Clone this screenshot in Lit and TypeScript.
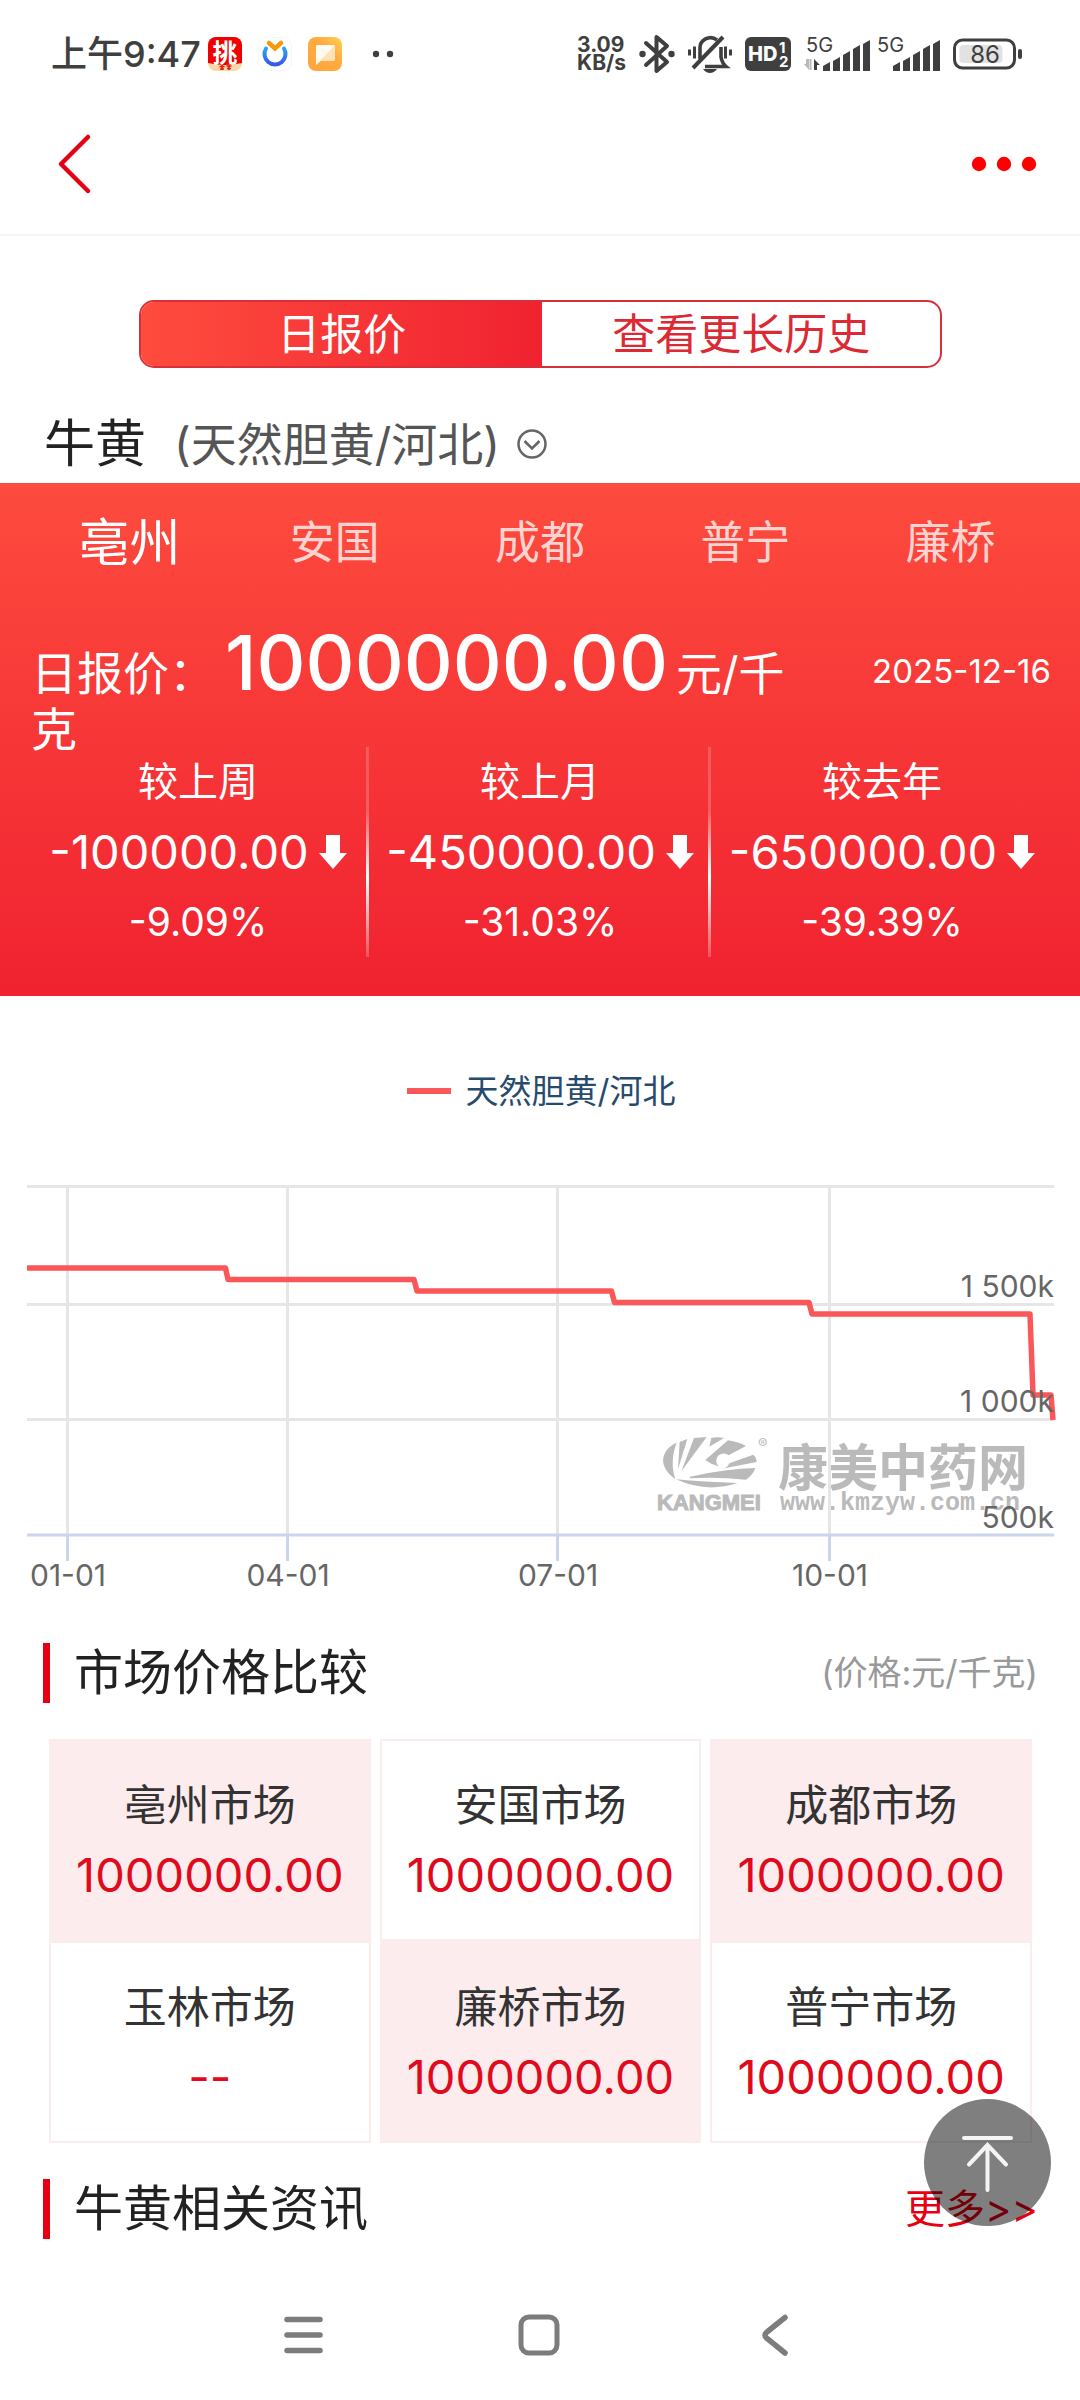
import { LitElement, html, svg, css } from "lit";
import { customElement, property, state } from "lit/decorators.js";
import { classMap } from "lit/directives/class-map.js";

const FONT = css`Inter, "Noto Sans CJK SC", sans-serif`;

/* ---------- status bar ---------- */

@customElement("status-bar")
class StatusBar extends LitElement {
  static styles = css`
    :host {
      display: flex;
      justify-content: space-between;
      align-items: center;
      height: 80px;
      padding: 14px 58px 0 51px;
      color: #3f3f3f;
      font-family: ${FONT};
    }
    .group {
      display: flex;
      align-items: center;
      gap: 13px;
    }
    .apps {
      display: flex;
      align-items: center;
      gap: 16px;
    }
    .left {
      gap: 7px;
    }
    .time {
      font-size: 36px;
      font-weight: 500;
      line-height: 40px;
    }
    .speed {
      font-size: 21px;
      font-weight: 700;
      line-height: 18px;
    }
    .signals {
      display: flex;
      gap: 7px;
    }
    svg {
      display: block;
      flex: none;
    }
    text {
      font-family: ${FONT};
    }
  `;

  private bars(x: number) {
    const tops = [26, 21, 15, 9, 4];
    return tops.map(
      (t, i) => svg`<path d="M${x + i * 10} 34v-${31 - t}l7 -4v${35 - t}z" fill="#3f3f3f" />`
    );
  }

  render() {
    return html`
      <div class="group left">
        <span class="time">上午9:47</span>
        <div class="apps">
          <svg width="34" height="34" viewBox="0 0 34 34" aria-hidden="true">
            <rect width="34" height="34" rx="8" fill="#f7d7a8" />
            <path d="M8 0h18a8 8 0 0 1 8 8v18q-17 4 -34 0V8a8 8 0 0 1 8 -8z" fill="#f00000" />
            <text x="17" y="25" text-anchor="middle" font-size="25" font-weight="700" fill="#fff">挑</text>
            <path d="M11.500 29.500h5M12 32h4M14 28v5M18.500 29h5M19 31.500h4M21 28v5" stroke="#e0200c" stroke-width="1.600" />
          </svg>
          <svg width="34" height="34" viewBox="0 0 34 34" aria-hidden="true">
            <defs>
              <linearGradient id="ring" x1="0" y1="0" x2="0" y2="1">
                <stop offset="0" stop-color="#2ea2f0" />
                <stop offset="1" stop-color="#3b57ea" />
              </linearGradient>
            </defs>
            <rect x=".5" y=".5" width="33" height="33" rx="8" fill="#fff" stroke="#f6f6f6" />
            <path d="M8 11.500a10.500 10.500 0 1 0 18 0" fill="none" stroke="url(#ring)" stroke-width="4" stroke-linecap="round" />
            <path d="M11 6l6 5.500l6 -5.500" fill="none" stroke="#f59a0c" stroke-width="4.500" stroke-linecap="round" />
          </svg>
          <svg width="34" height="34" viewBox="0 0 34 34" aria-hidden="true">
            <defs>
              <linearGradient id="amber" x1="0" y1="1" x2="1" y2="0">
                <stop offset="0" stop-color="#ffa53c" />
                <stop offset=".6" stop-color="#ffab40" />
                <stop offset="1" stop-color="#ffd050" />
              </linearGradient>
            </defs>
            <rect width="34" height="34" rx="8" fill="url(#amber)" />
            <path d="M10 8h15a2 2 0 0 1 2 2v12a2 2 0 0 1 -2 2H13l-5 4V10a2 2 0 0 1 2 -2z" fill="#ffe2b8" />
            <path d="M10 8h17L8 28V10a2 2 0 0 1 2 -2z" fill="#fffaf0" />
          </svg>
          <svg width="50" height="34" viewBox="0 0 50 34" aria-hidden="true">
            <circle cx="18" cy="17" r="3.200" fill="#3f3f3f" />
            <circle cx="32" cy="17" r="3.200" fill="#3f3f3f" />
          </svg>
        </div>
      </div>
      <div class="group">
        <div class="speed">3.09<br />KB/s</div>
        <svg width="36" height="40" viewBox="0 0 36 40" aria-hidden="true">
          <path d="M7 9L28 28L17.500 37V3L28 12L7 31" fill="none" stroke="#3f3f3f" stroke-width="4" stroke-linejoin="round" stroke-linecap="round" />
          <circle cx="3.500" cy="20" r="3.200" fill="#3f3f3f" />
          <circle cx="32.500" cy="20" r="3.200" fill="#3f3f3f" />
        </svg>
        <svg width="44" height="40" viewBox="0 0 44 40" aria-hidden="true">
          <g fill="none" stroke="#3f3f3f" stroke-width="3.600">
            <path d="M12 25V15a10.500 10.500 0 0 1 17 -9" />
            <path d="M33 13v10q1 6 5 9.500H17" />
            <path d="M35 3L5 34" stroke-width="4" />
          </g>
          <path d="M15 35h14q-3 4 -7 4t-7 -4z" fill="#3f3f3f" />
          <path d="M1.500 15.500v6M6.500 12.500v12M37.500 12.500v12M42.500 15.500v6" stroke="#3f3f3f" stroke-width="3" />
        </svg>
        <svg width="46" height="34" viewBox="0 0 46 34" aria-hidden="true">
          <rect width="46" height="34" rx="6" fill="#3f3f3f" />
          <text x="3" y="24" font-size="20" font-weight="800" fill="#fff">HD</text>
          <text x="34" y="16" font-size="15" font-weight="700" fill="#fff">1</text>
          <text x="34" y="30" font-size="15" font-weight="700" fill="#fff">2</text>
        </svg>
        <div class="signals">
          <svg width="66" height="50" viewBox="0 -8 66 50" aria-hidden="true">
            <text x="2" y="15" font-size="20" fill="#3f3f3f">5G</text>
            <path d="M5 22v11L0 27h2v-5z" fill="#b9b9b9" />
            <path d="M6.500 22v11" stroke="#b9b9b9" stroke-width="2" />
            <path d="M10 33V22l6 6h-3v5z" fill="#3f3f3f" />
            ${this.bars(19)}
          </svg>
          <svg width="63" height="50" viewBox="0 -8 63 50" aria-hidden="true">
            <text x="0" y="15" font-size="20" fill="#3f3f3f">5G</text>
            ${this.bars(16)}
          </svg>
        </div>
        <svg width="69" height="32" viewBox="0 0 69 32" aria-hidden="true">
          <rect x="1.500" y="2" width="60" height="28" rx="8" fill="none" stroke="#3f3f3f" stroke-width="3" />
          <rect x="6.500" y="7" width="43" height="18" rx="4" fill="#e2e2e2" />
          <rect x="65" y="11" width="4" height="10" rx="2" fill="#3f3f3f" />
          <text x="32" y="25" text-anchor="middle" font-size="24" fill="#3f3f3f">86</text>
        </svg>
      </div>
    `;
  }
}

/* ---------- price trend ---------- */

interface Tick {
  at: number;
  label: string;
}

@customElement("trend-chart")
class TrendChart extends LitElement {
  @property() series = "";

  static styles = css`
    :host {
      display: block;
      font-family: ${FONT};
    }
    .legend {
      display: flex;
      justify-content: center;
      align-items: center;
      gap: 15px;
      padding: 65px 0 0 2px;
      line-height: 60px;
      font-size: 33px;
      color: #274b6d;
    }
    .swatch {
      width: 44px;
      height: 6px;
      background: #fb5759;
    }
    .plot {
      display: block;
      width: 100%;
      height: auto;
    }
    .label {
      font-family: ${FONT};
      font-size: 30px;
      fill: #666;
    }
    .brand {
      font-family: ${FONT};
      font-size: 50px;
      font-weight: 700;
    }
    .latin {
      font-family: "Liberation Sans", sans-serif;
      font-size: 22px;
      font-weight: 700;
      stroke: #bababa;
      stroke-width: 1px;
    }
    .url {
      font-family: "Liberation Mono", monospace;
      font-size: 25px;
      font-weight: 700;
    }
    .reg {
      font-family: ${FONT};
      font-size: 14px;
    }
  `;

  private xTicks: Tick[] = [
    { at: 67, label: "01-01" },
    { at: 287, label: "04-01" },
    { at: 557, label: "07-01" },
    { at: 829, label: "10-01" },
  ];

  private yTicks: Tick[] = [
    { at: 183, label: "1 500k" },
    { at: 298, label: "1 000k" },
    { at: 414, label: "500k" },
  ];

  render() {
    return html`
      <div class="legend"><span class="swatch"></span>${this.series}</div>
      <svg class="plot" viewBox="0 0 1080 479" role="img" aria-label=${this.series}>
        <g fill="#bababa">
          <g transform="translate(640 289) scale(.3333)">
            <path d="M110 98C72 114 44 162 106 207C94 172 96 134 110 98z" />
            <path d="M119 96L142 87L114 178z" />
            <path d="M162 84L200 81L124 184z" />
            <path d="M214 84Q232 80 252 84L208 110z" />
            <path d="M196 150L264 91Q296 96 318 108L266 136A21 21 0 1 0 236 169Q214 164 196 150z" />
            <path d="M268 160L340 134Q350 142 350 156L238 178Q262 176 268 160z" />
            <path d="M150 200Q260 176 346 174Q340 194 318 209Q230 200 150 205z" />
            <path d="M108 208Q190 216 292 219Q200 250 108 208z" />
          </g>
          <text class="latin" x="657" y="389">KANGMEI</text>
          <text class="reg" x="758" y="328">®</text>
          <text class="brand" x="778" y="365">康美中药网</text>
          <text class="url" x="780" y="389">www.kmzyw.com.cn</text>
        </g>
        <g stroke="#e6e6e6" stroke-width="3">
          <path d="M27 65.500H1054M27 183.500H1054M27 298.500H1054" />
          ${this.xTicks.map((t) => svg`<path d="M${t.at + 0.5} 65V414" />`)}
        </g>
        <g stroke="#ccd6eb" stroke-width="3">
          <path d="M27 414H1054" />
          ${this.xTicks.map((t) => svg`<path d="M${t.at + 0.5} 414V440" />`)}
        </g>
        <path
          d="M27 147H225.500L228 158.500H414L417 170H611.500L614.500 181.500H809L812 193H1030L1033 274H1051L1053 299"
          fill="none" stroke="#fb5759" stroke-width="5.500" stroke-linejoin="round"
        />
        ${this.xTicks.map(
          (t) => svg`<text class="label" x=${t.at + 1} y="465" text-anchor="middle">${t.label}</text>`
        )}
        ${this.yTicks.map(
          (t) => svg`<text class="label" x="1054" y=${t.at - 7} text-anchor="end">${t.label}</text>`
        )}
      </svg>
    `;
  }
}

/* ---------- page ---------- */

@customElement("app-root")
class AppRoot extends LitElement {
  @state() private city = 0;

  private cities = ["亳州", "安国", "成都", "普宁", "廉桥"];

  private changes = [
    { name: "较上周", value: "-100000.00", rate: "-9.09%" },
    { name: "较上月", value: "-450000.00", rate: "-31.03%" },
    { name: "较去年", value: "-650000.00", rate: "-39.39%" },
  ];

  private markets = [
    { name: "亳州市场", price: "1000000.00" },
    { name: "安国市场", price: "1000000.00" },
    { name: "成都市场", price: "1000000.00" },
    { name: "玉林市场", price: "--" },
    { name: "廉桥市场", price: "1000000.00" },
    { name: "普宁市场", price: "1000000.00" },
  ];

  static styles = css`
    :host {
      display: flex;
      flex-direction: column;
      position: relative;
      min-height: 100vh;
      background: #fff;
      color: #222;
      font-family: ${FONT};
    }
    button,
    select {
      margin: 0;
      padding: 0;
      border: 0;
      background: none;
      color: inherit;
      font: inherit;
      cursor: pointer;
    }
    svg {
      display: block;
      flex: none;
    }
    h1,
    h2,
    p,
    ul {
      margin: 0;
      padding: 0;
      font-weight: 400;
    }
    .header {
      display: flex;
      justify-content: space-between;
      align-items: center;
      height: 140px;
      padding: 0 43px 0 57px;
      border-bottom: 2px solid #f4f4f4;
    }
    .segments {
      display: grid;
      grid-template-columns: 101fr 100fr;
      margin: 64px 138px 0 139px;
      border: 2px solid #d8303a;
      border-radius: 15px;
      overflow: hidden;
      font-size: 43px;
      line-height: 64px;
    }
    .segment {
      color: #dc2a35;
    }
    .segment.on {
      color: #fff;
      background: linear-gradient(90deg, #fe4c3e, #f02230);
    }
    .title {
      display: flex;
      align-items: center;
      gap: 28px;
      height: 78px;
      padding: 37px 44px 0;
    }
    .name {
      font-size: 51px;
      line-height: 80px;
    }
    .variety {
      display: flex;
      align-items: center;
      gap: 16px;
    }
    .pick {
      appearance: none;
      font-size: 46px;
      line-height: 80px;
      color: #555;
    }
    .quote {
      padding: 0 27px 39px;
      color: #fff;
      background: linear-gradient(180deg, #fd4b3e, #f02230);
    }
    .cities {
      display: grid;
      grid-template-columns: repeat(5, 1fr);
      height: 112px;
    }
    .city {
      font-size: 45px;
      color: #ffd3cf;
    }
    .city.on {
      font-size: 51px;
      color: #fff;
    }
    .today {
      display: flex;
      justify-content: space-between;
      align-items: flex-start;
      gap: 44px;
      padding: 39px 2px 0 4px;
    }
    .price {
      flex: 1;
      font-size: 46px;
      line-height: 56px;
    }
    .amount {
      margin: 0 8px 0 10px;
      font-size: 76px;
      font-weight: 500;
    }
    .date {
      font-size: 33px;
      line-height: 74px;
    }
    .changes {
      display: grid;
      grid-template-columns: repeat(3, 1fr);
      margin-top: -10px;
    }
    .change {
      display: flex;
      flex-direction: column;
      align-items: center;
      line-height: 70px;
      background: linear-gradient(180deg, #ffffff2e, #ffffff33 30%, #fff 62%, #ffffff33) right / 3px 100% no-repeat;
    }
    .change:last-child {
      background: none;
    }
    .term {
      font-size: 40px;
    }
    .delta {
      display: flex;
      align-items: center;
      gap: 10px;
      font-size: 47px;
    }
    .rate {
      font-size: 39px;
    }
    .section {
      display: flex;
      align-items: center;
      justify-content: space-between;
      margin-top: 36px;
      padding: 0 42px 0 43px;
      line-height: 60px;
    }
    .section.first {
      margin-top: 43px;
    }
    .heading {
      padding-left: 24px;
      border-left: 7px solid #e60012;
      font-size: 49px;
    }
    .unit {
      font-size: 34px;
      color: #999;
    }
    .more {
      font-size: 40px;
      color: #e60012;
      text-decoration: none;
    }
    .markets {
      display: grid;
      grid-template-columns: repeat(3, 1fr);
      column-gap: 9px;
      margin: 36px 48px 0 49px;
      list-style: none;
    }
    .market {
      display: flex;
      flex-direction: column;
      align-items: center;
      padding: 30px 0;
      border: 2px solid #fbecee;
      line-height: 69px;
    }
    .market:nth-child(odd) {
      background: #fdecee;
    }
    .place {
      font-size: 43px;
      color: #333;
    }
    .cost {
      font-size: 47px;
      color: #e00a1c;
    }
    .top {
      position: absolute;
      right: 29px;
      bottom: 174px;
      width: 127px;
      height: 127px;
      border-radius: 50%;
      background: #00000080;
    }
    .nav {
      display: flex;
      justify-content: space-between;
      align-items: center;
      height: 130px;
      margin-top: auto;
      padding: 0 282px 0 280px;
    }
  `;

  render() {
    return html`
      <status-bar></status-bar>
      <header class="header">
        <button aria-label="返回">
          <svg width="36" height="62" viewBox="0 0 36 62">
            <path d="M31 4L4 31L31 58" fill="none" stroke="#e60012" stroke-width="4.500" stroke-linecap="round" stroke-linejoin="round" />
          </svg>
        </button>
        <button aria-label="菜单">
          <svg width="66" height="16" viewBox="0 0 66 16" fill="#f00">
            <circle cx="8" cy="8" r="7.200" />
            <circle cx="33" cy="8" r="7.200" />
            <circle cx="58" cy="8" r="7.200" />
          </svg>
        </button>
      </header>

      <div class="segments">
        <button class="segment on">日报价</button>
        <button class="segment">查看更长历史</button>
      </div>

      <div class="title">
        <h1 class="name">牛黄</h1>
        <label class="variety">
          <select class="pick" aria-label="规格">
            <option>(天然胆黄/河北)</option>
          </select>
          <svg width="30" height="30" viewBox="0 0 30 30" fill="none" stroke="#666" stroke-width="2.500">
            <circle cx="15" cy="15" r="13.500" />
            <path d="M7.500 12L15 19.500L22.500 12" />
          </svg>
        </label>
      </div>

      <section class="quote">
        <div class="cities">
          ${this.cities.map(
            (c, i) => html`<button
              class=${classMap({ city: true, on: i === this.city })}
              @click=${() => (this.city = i)}
            >${c}</button>`
          )}
        </div>
        <div class="today">
          <p class="price">日报价：<span class="amount">1000000.00</span>元/千克</p>
          <time class="date">2025-12-16</time>
        </div>
        <div class="changes">
          ${this.changes.map(
            (c) => html`<div class="change">
              <span class="term">${c.name}</span>
              <span class="delta">${c.value}
                <svg width="28" height="34" viewBox="0 0 28 34" aria-hidden="true">
                  <path d="M7 0H21V18H28L14 34L0 18H7z" fill="#fff" />
                </svg>
              </span>
              <span class="rate">${c.rate}</span>
            </div>`
          )}
        </div>
      </section>

      <trend-chart series="天然胆黄/河北"></trend-chart>

      <div class="section first">
        <h2 class="heading">市场价格比较</h2>
        <span class="unit">(价格:元/千克)</span>
      </div>
      <ul class="markets">
        ${this.markets.map(
          (m) => html`<li class="market">
            <span class="place">${m.name}</span>
            <span class="cost">${m.price}</span>
          </li>`
        )}
      </ul>

      <div class="section">
        <h2 class="heading">牛黄相关资讯</h2>
        <a class="more" href="#news">更多&gt;&gt;</a>
      </div>

      <button class="top" aria-label="回到顶部">
        <svg width="127" height="127" viewBox="0 0 127 127" fill="none" stroke="#f4f4f4" stroke-width="4" stroke-linecap="round">
          <path d="M40 39H87M63.500 46V91M45 65.500L63.500 46L82 65.500" />
        </svg>
      </button>

      <nav class="nav">
        <button aria-label="最近任务">
          <svg width="46" height="46" viewBox="0 0 46 46" stroke="#7c7c7c" stroke-width="5.500" stroke-linecap="round">
            <path d="M7 7.500H40M7 23H40M7 38.500H40" />
          </svg>
        </button>
        <button aria-label="主页">
          <svg width="46" height="46" viewBox="0 0 46 46" fill="none" stroke="#7c7c7c" stroke-width="5">
            <rect x="5" y="5" width="36" height="36" rx="8" />
          </svg>
        </button>
        <button aria-label="后退">
          <svg width="46" height="46" viewBox="0 0 46 46" fill="none" stroke="#7c7c7c" stroke-width="5.500" stroke-linecap="round">
            <path d="M33 5.500L15 20Q11 23 15 26.500L33 41" />
          </svg>
        </button>
      </nav>
    `;
  }
}
